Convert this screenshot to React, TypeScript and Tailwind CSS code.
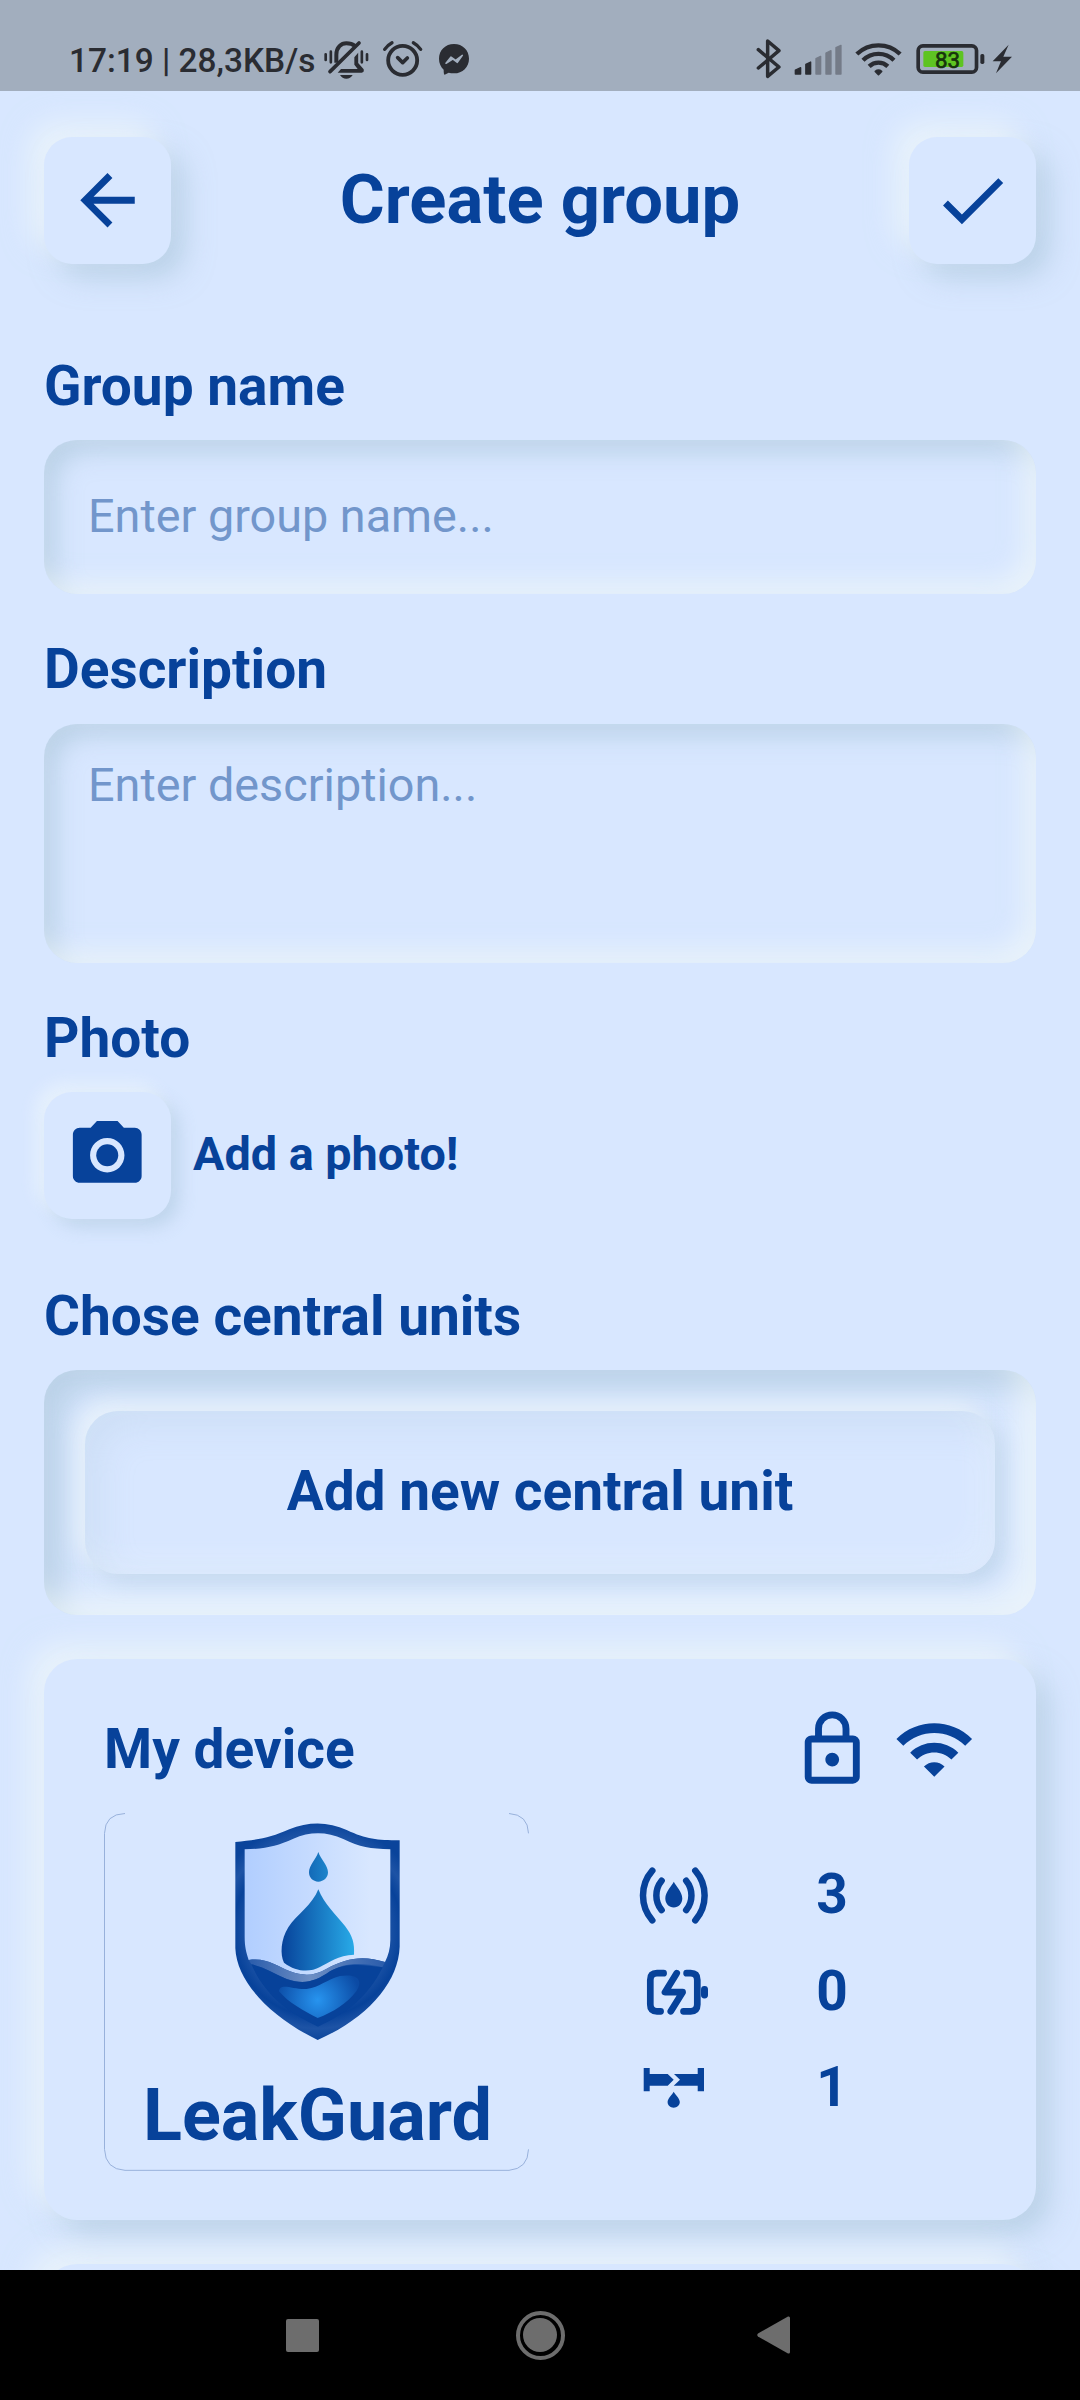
import type { ReactNode } from "react";

const INK = "#07429a";
const STATUS = "#2a2c32";

/* ---------- status bar icons ---------- */

const MutedBell = () => (
  <svg width="46.7" height="40" viewBox="848 117 140 120" fill="none" stroke={STATUS} strokeLinecap="round" strokeLinejoin="round">
    <path d="M888 188V164C888 141 903 129.500 918 129.500C929 129.500 938 133 944 138" strokeWidth="12" strokeLinecap="butt" />
    <path d="M956 129L869 215" strokeWidth="11" />
    <path d="M942 172L953.500 158V189L970 208Q972 218 964 218H892L902 207H952L942 194Z" fill={STATUS} stroke="none" />
    <path d="M899 225H937C933 232 926 236 918 236C910 236 903 232 899 225Z" fill={STATUS} stroke="none" />
    <path d="M856 163V180M871.500 155V187M964.500 155V187M980 163V180" strokeWidth="8" />
  </svg>
);

const Alarm = () => (
  <svg width="41" height="40" viewBox="1026 117 123 120" fill="none" stroke={STATUS} strokeLinecap="round" strokeLinejoin="round">
    <circle cx="1088" cy="181" r="43.500" strokeWidth="11.500" />
    <path d="M1034 148Q1043 135 1056 128M1120 128Q1133 135 1142 148" strokeWidth="10" />
    <path d="M1073 173L1088 188L1102 174" strokeWidth="11" />
  </svg>
);

const Messenger = () => (
  <svg width="32" height="40" viewBox="1194 117 96 120" fill="none">
    <path d="M1242 132C1268 132 1287 151 1287 176C1287 201 1268 220 1242 220Q1233 220 1226 218L1214 224Q1211 224 1211 209C1202 200 1197 189 1197 176C1197 151 1216 132 1242 132Z" fill={STATUS} />
    <path d="M1218 190L1233 171L1247 181L1267 166L1252 187L1238 177Z" fill="#a2aebe" stroke="#a2aebe" strokeWidth="4.500" strokeLinejoin="round" />
  </svg>
);

const Bluetooth = () => (
  <svg width="25.3" height="40" viewBox="166 117 76 120" fill="none" stroke={STATUS} strokeWidth="10.500" strokeLinecap="round" strokeLinejoin="round">
    <path d="M173 149L235 201L201 229V123L235 152L173 204" />
  </svg>
);

const Signal = () => (
  <svg width="48.3" height="40" viewBox="282 117 145 120" strokeWidth="4" strokeLinejoin="round">
    <g fill={STATUS} stroke={STATUS}>
      <path d="M286 210L302 203V222H286Z" />
      <path d="M317.500 193L332 186V222H317.500Z" />
    </g>
    <g fill="#747b88" stroke="#747b88">
      <path d="M348 176L362 169V222H348Z" />
      <path d="M378 159L393 152V222H378Z" />
      <path d="M408 143L423 136V222H408Z" />
    </g>
  </svg>
);

const StatusWifi = () => (
  <svg width="47.3" height="40" viewBox="463 117 142 120" fill="none" stroke={STATUS} strokeWidth="13">
    <path d="M468.500 162A94 94 0 0 1 598.500 162" />
    <path d="M487 181A66 66 0 0 1 580 181" />
    <path d="M505.500 199A41 41 0 0 1 561.500 199" />
    <path d="M524 214Q533.500 207 543 214L533.500 224Z" fill={STATUS} strokeWidth="5" strokeLinejoin="round" />
  </svg>
);

const Battery = () => (
  <svg width="68.7" height="40" viewBox="647 117 206 120">
    <rect x="653.500" y="137.500" width="175" height="79" rx="14" fill="none" stroke={STATUS} strokeWidth="11" />
    <rect x="669" y="153" width="120" height="48" rx="5" fill="#5ec422" />
    <rect x="840" y="162" width="12" height="30" rx="5" fill={STATUS} />
    <text x="741.500" y="203" textAnchor="middle" fontFamily="Roboto" fontWeight="400" fontSize="67" fill="#17330d" stroke="#17330d" strokeWidth="2">
      83
    </text>
  </svg>
);

const Charging = () => (
  <svg width="20.3" height="40" viewBox="874 117 61 120">
    <path d="M924 134L876 184H901L886 220L934 170H908Z" fill={STATUS} />
  </svg>
);

/* ---------- app icons ---------- */

function Icon({ d, children }: { d?: string; children?: ReactNode }) {
  return (
    <svg width="82.500" height="82.500" viewBox="0 0 24 24" fill={INK} className="shrink-0">
      {d && <path d={d} />}
      {children}
    </svg>
  );
}

const ARROW = "M20 11V13H8L13.500 18.500L12.080 19.920L4.160 12L12.080 4.080L13.500 5.500L8 11H20Z";
const CHECK = "M21 7L9 19L3.500 13.500L4.910 12.090L9 16.170L19.590 5.590L21 7Z";
const LOCK =
  "M12 17C10.890 17 10 16.100 10 15C10 13.890 10.890 13 12 13A2 2 0 0 1 14 15A2 2 0 0 1 12 17M18 20V10H6V20H18M18 8A2 2 0 0 1 20 10V20A2 2 0 0 1 18 22H6C4.890 22 4 21.100 4 20V10C4 8.890 4.890 8 6 8H7V6A5 5 0 0 1 12 1A5 5 0 0 1 17 6V8H18M12 3A3 3 0 0 0 9 6V8H15V6A3 3 0 0 0 12 3Z";
const WIFI =
  "M1 9l2 2c4.970-4.970 13.030-4.970 18 0l2-2C16.930 2.930 7.080 2.930 1 9zm8 8l3 3 3-3c-1.650-1.660-4.340-1.660-6 0zm-4-4l2 2c2.760-2.760 7.240-2.760 10 0l2-2C15.140 9.140 8.870 9.140 5 13z";
const CAMERA =
  "M9 2L7.170 4H4c-1.100 0-2 .9-2 2v12c0 1.100.9 2 2 2h16c1.100 0 2-.9 2-2V6c0-1.100-.9-2-2-2h-3.170L15 2H9zm3 15c-2.760 0-5-2.240-5-5s2.240-5 5-5 5 2.240 5 5-2.240 5-5 5z";

const SensorIcon = () => (
  <svg width="83" height="83" viewBox="0 0 83 83" fill="none" stroke={INK} strokeWidth="6.500" strokeLinecap="round">
    <path d="M20.300 16.700A37.700 37.700 0 0 0 20.300 66.300M63.300 16.700A37.700 37.700 0 0 1 63.300 66.300" />
    <path d="M29.600 26.700A23.200 23.200 0 0 0 29.600 56.100M54.200 26.700A23.200 23.200 0 0 1 54.200 56.100" />
    <path d="M41.800 27.800C44 32 50.300 38 50.300 44.500C50.300 49.500 46.500 53.500 41.800 53.500C37 53.500 33.300 49.500 33.300 44.500C33.300 38 39.600 32 41.800 27.800Z" fill={INK} stroke="none" />
  </svg>
);

const BatteryIcon = () => (
  <svg width="83" height="83" viewBox="0 0 83 83" fill="none" stroke={INK} strokeWidth="6.700" strokeLinecap="round" strokeLinejoin="round">
    <path d="M31.600 22.200H25Q18.300 22.200 18.300 28.900V53.600Q18.300 60.300 25 60.300H28.600" />
    <path d="M54.600 22.200H58.600Q65.300 22.200 65.300 28.900V53.600Q65.300 60.300 58.600 60.300H51.500" />
    <path d="M44.700 22.200L33 41.200H50.600L38.800 60.300" />
    <rect x="69" y="35" width="7" height="12.500" rx="3.400" fill={INK} stroke="none" />
  </svg>
);

const PipeIcon = () => (
  <svg width="83" height="83" viewBox="0 0 83 83" fill={INK}>
    <path d="M11.700 21H17.700V27H35.700L41.700 32.700L35.700 38.700H17.700V44.200H11.700Z" />
    <path d="M72 21H65.700V27H42L48 32.700L41.700 38.700H65.700V44.200H72Z" />
    <path d="M41.700 44.700C43.500 48 47.800 51.500 47.800 55C47.800 58.300 45 60.700 41.700 60.700C38.300 60.700 35.600 58.300 35.600 55C35.600 51.500 40 48 41.700 44.700Z" />
  </svg>
);

/** Shield emblem together with the thin broken frame around the device picture. */
const ShieldArt = () => (
  <svg className="absolute inset-0" width="425" height="358" viewBox="72 99 1275 1074" fill="none">
    <defs>
      <linearGradient id="glass" gradientUnits="userSpaceOnUse" x1="494" y1="0" x2="870" y2="0">
        <stop offset="0" stopColor="#b1ceff" />
        <stop offset="1" stopColor="#d8e7ff" />
      </linearGradient>
      <linearGradient id="drop" gradientUnits="userSpaceOnUse" x1="604" y1="0" x2="824" y2="0">
        <stop offset="0" stopColor="#07429a" />
        <stop offset="1" stopColor="#28abe8" />
      </linearGradient>
      <radialGradient id="glow" gradientUnits="userSpaceOnUse" cx="713" cy="660" r="128">
        <stop offset="0" stopColor="#2794ef" />
        <stop offset="1" stopColor="#0b4aa4" />
      </radialGradient>
      <radialGradient id="rim" gradientUnits="userSpaceOnUse" cx="713" cy="455" r="330">
        <stop offset="0.620" stopColor="#1f55a7" />
        <stop offset="0.770" stopColor="#07429a" />
        <stop offset="0.880" stopColor="#1d53a5" />
        <stop offset="1" stopColor="#0a449b" />
      </radialGradient>
      <linearGradient id="foam" gradientUnits="userSpaceOnUse" x1="506" y1="0" x2="915" y2="0">
        <stop offset="0" stopColor="#2a5cab" />
        <stop offset="0.450" stopColor="#6e8fc4" />
        <stop offset="1" stopColor="#2a5cab" />
      </linearGradient>
    </defs>
    <g stroke="#98b1db" strokeWidth="3">
      <path d="M135 100.500Q75 102 73.500 160V1108Q76 1168 135 1171H1287Q1344 1166 1345.500 1108" />
      <path d="M1287 100.500Q1344 104 1345.500 160" />
    </g>
    <path d="M466 186C530 180 570 174 628 148C685 124 745 124 800 150C860 178 890 180 959 181V500C955 610 860 715 713 780C570 710 470 605 466 505Z" fill="url(#rim)" />
    <path d="M494 208C560 206 590 198 640 176C690 154 740 154 790 177C840 202 870 206 931 208V480C931 505 925 527 915 546C850 525 800 533 740 566C700 589 670 588 630 574C590 558 560 532 506 540C498 515 494 500 494 470Z" fill="url(#glass)" />
    <path d="M506 540C560 532 590 558 630 574C670 588 700 589 740 566C800 533 850 525 915 546L907 562C840 545 790 550 750 574C705 606 670 614 620 597C580 580 550 560 514 553Z" fill="url(#foam)" />
    <path d="M514 553C550 560 580 580 620 597C670 614 705 606 750 574C790 550 840 552 908 562C865 650 800 700 714 740C620 695 555 645 514 553Z" fill={INK} />
    <path d="M597 634C600 606 640 630 680 627C720 622 740 598 780 588C832 580 850 600 830 632C800 672 760 695 713 714C670 692 625 668 597 634Z" fill="url(#glow)" />
    <path d="M715 328C732 372 768 404 795 438C818 468 824 490 822 524C775 526 745 548 720 561C690 577 650 577 612 548C600 525 602 478 625 442C650 404 698 374 715 328Z" fill="url(#drop)" />
    <path d="M715 216C722 238 744 256 744 277C744 293 731 305 715 305C699 305 687 293 687 277C687 256 708 238 715 216Z" fill="url(#drop)" />
  </svg>
);

/* ---------- building blocks ---------- */

const RAISED = "shadow-[-14px_-14px_28px_rgba(251,255,250,0.500),14px_14px_28px_rgba(159,190,212,0.500)]";
const RAISED_SMALL = "shadow-[-8px_-8px_17px_rgba(251,255,250,0.450),8px_8px_17px_rgba(159,190,212,0.450)]";
const INSET = "shadow-[inset_-12px_-12px_25px_rgba(251,255,250,0.500),inset_12px_12px_25px_rgba(159,190,212,0.500)]";
const INSET_DEEP = "shadow-[inset_-18px_-18px_28px_rgba(251,255,250,0.500),inset_18px_18px_28px_rgba(159,190,212,0.500)]";

const SectionTitle = ({ children }: { children: string }) => (
  <h2 className="h-16 text-[55px] leading-[64px] font-bold whitespace-nowrap">{children}</h2>
);

const SoftButton = ({ children, shadow }: { children: ReactNode; shadow: string }) => (
  <button className={`${shadow} flex size-[127px] shrink-0 items-center justify-center rounded-[28px] bg-[#d8e7ff]`}>
    {children}
  </button>
);

const stats = [
  { icon: <SensorIcon />, value: 3 },
  { icon: <BatteryIcon />, value: 0 },
  { icon: <PipeIcon />, value: 1 },
];

export default function App() {
  return (
    <div className="flex h-[2400px] w-[1080px] flex-col overflow-hidden bg-[#d8e7ff] font-[Roboto,sans-serif] text-[#07429a]">
      <header className="relative z-10 flex h-[91px] shrink-0 items-start justify-between bg-[#a2aebe] pt-[39px] pr-[68px] pl-[69px]">
        <div className="flex">
          <span className="w-[253.700px] text-[33.400px] leading-[43px] font-medium whitespace-nowrap text-[#2a2c32]">17:19 | 28,3KB/s</span>
          <MutedBell />
          <div className="ml-[12.700px] flex gap-[15px]">
            <Alarm />
            <Messenger />
          </div>
        </div>
        <div className="flex">
          <Bluetooth />
          <div className="ml-[13.300px] flex gap-3">
            <Signal />
            <StatusWifi />
          </div>
          <div className="ml-[14px] flex gap-[7px]">
            <Battery />
            <Charging />
          </div>
        </div>
      </header>

      <main className="flex h-[2179px] shrink-0 flex-col overflow-hidden px-11 pt-[46px]">
        <div className="flex shrink-0 items-center justify-between">
          <SoftButton shadow={RAISED}>
            <Icon d={ARROW} />
          </SoftButton>
          <h1 className="pb-px text-[68.750px] leading-[78px] font-bold whitespace-nowrap">Create group</h1>
          <SoftButton shadow={RAISED}>
            <Icon d={CHECK} />
          </SoftButton>
        </div>

        <section className="mt-[90px] shrink-0">
          <SectionTitle>Group name</SectionTitle>
          <div className={`${INSET} mt-[22px] flex h-[154px] items-center rounded-[33px] px-11`}>
            <span className="pb-[3px] text-[46.750px] leading-[54px] whitespace-nowrap text-[#7296cb]">Enter group name...</span>
          </div>
        </section>

        <section className="mt-[43px] shrink-0">
          <SectionTitle>Description</SectionTitle>
          <div className={`${INSET} mt-[23px] h-[239px] rounded-[33px] px-11 pt-[34px]`}>
            <p className="text-[46.750px] leading-[54px] whitespace-nowrap text-[#7296cb]">Enter description...</p>
          </div>
        </section>

        <section className="mt-[43px] shrink-0">
          <SectionTitle>Photo</SectionTitle>
          <div className="mt-[22px] flex items-center gap-[22px]">
            <SoftButton shadow={RAISED_SMALL}>
              <Icon d={CAMERA}>
                <circle cx="12" cy="12" r="3.200" />
              </Icon>
            </SoftButton>
            <span className="pb-[3px] text-[46.750px] leading-[54px] font-bold whitespace-nowrap">Add a photo!</span>
          </div>
        </section>

        <section className="mt-[65px] shrink-0">
          <SectionTitle>Chose central units</SectionTitle>
          <div className={`${INSET_DEEP} mt-[22px] flex h-[245px] rounded-[33px] p-[41px]`}>
            <button className="flex grow items-center justify-center rounded-[33px] bg-[#d8e7ff] pb-[3px] text-[55px] leading-[64px] font-bold whitespace-nowrap shadow-[-8px_-8px_20px_rgba(251,255,250,0.500),8px_8px_20px_rgba(159,190,212,0.400),inset_-14px_-14px_36px_rgba(251,255,250,0.200),inset_14px_14px_36px_rgba(159,190,212,0.200)]">
              Add new central unit
            </button>
          </div>
        </section>

        <article className={`${RAISED} mt-11 h-[561px] shrink-0 rounded-[33px] bg-[#d8e7ff] pt-[49px] pr-[61px] pl-[60px]`}>
          <div className="flex h-[83px] items-center justify-between">
            <h3 className="pb-[2px] text-[55px] leading-[64px] font-bold whitespace-nowrap">My device</h3>
            <div className="flex gap-[19.500px]">
              <Icon d={LOCK} />
              <Icon d={WIFI} />
            </div>
          </div>
          <div className="mt-[22px] flex items-center">
            <div className="relative h-[358px] w-[425px] pt-[263px] pl-[2px] text-center">
              <ShieldArt />
              <p className="text-[72px] leading-[80px] font-bold whitespace-nowrap">LeakGuard</p>
            </div>
            <ul className="ml-[103px]">
              {stats.map((s, i) => (
                <li key={i} className="flex h-[96.500px] items-center gap-[76px]">
                  {s.icon}
                  <span className="w-[82px] pb-[3px] text-center text-[55px] leading-[64px] font-bold">{s.value}</span>
                </li>
              ))}
            </ul>
          </div>
        </article>

        <article className={`${RAISED} mt-11 h-[561px] shrink-0 rounded-[33px] bg-[#d8e7ff]`} />
      </main>

      <nav className="flex h-[130px] shrink-0 items-center bg-black pl-[286px]">
        <div className="size-[33px] rounded-[2px] bg-[#6d6d6d]" />
        <div className="ml-[196.500px] flex size-[49px] items-center justify-center rounded-full border-4 border-[#6d6d6d]">
          <div className="size-[33.500px] rounded-full bg-[#6d6d6d]" />
        </div>
        <svg className="ml-[192.500px]" width="33" height="38" viewBox="0 0 33 38" fill="#6d6d6d">
          <path d="M31 0.500Q33 0 33 2V36Q33 38 31 37.500L1 20.500Q-0.500 19 1 17.500Z" />
        </svg>
      </nav>
    </div>
  );
}
